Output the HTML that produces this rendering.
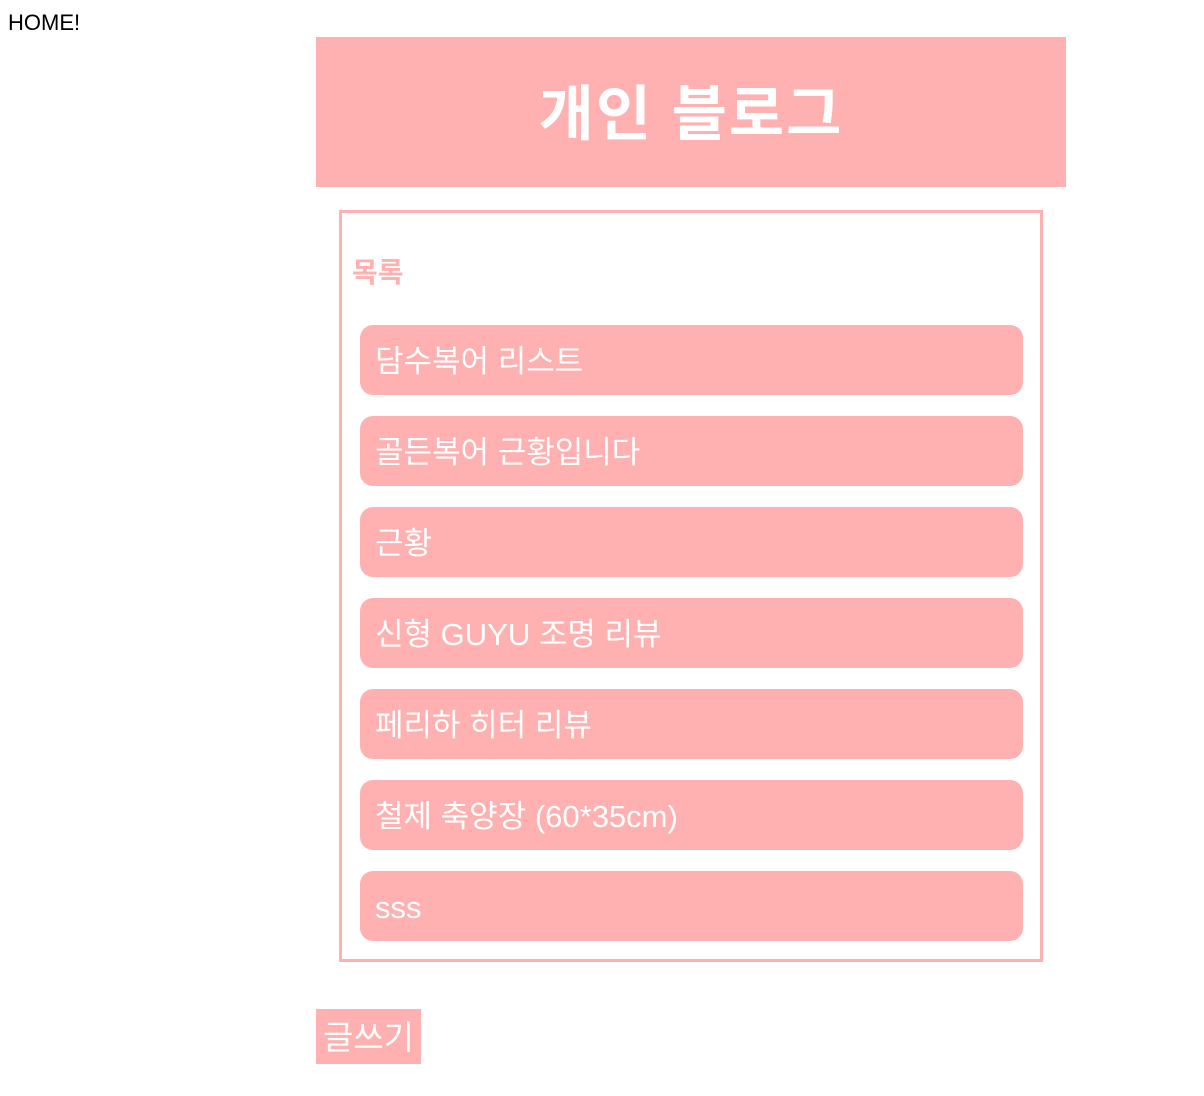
<!DOCTYPE html>
<html><head><meta charset="utf-8"><style>
body{margin:0;background:#fff;font-family:"Liberation Sans","Noto Sans CJK KR",sans-serif;}
.home{position:absolute;left:8px;top:9px;font-size:22px;color:#000;line-height:28px;}
.hdr{position:absolute;left:316px;top:37px;width:750px;height:150px;background:#ffb0b0;color:#fff;font-size:60px;font-weight:bold;text-align:center;line-height:156px;letter-spacing:2px;}
.box{position:absolute;left:339px;top:210px;width:698px;height:746px;border:3px solid #ffb0b0;}
.ttl{position:absolute;left:10px;top:38px;font-size:28px;font-weight:bold;color:#ffb0b0;}
.item{position:absolute;left:18px;width:663px;height:70px;background:#ffb0b0;border-radius:13px;color:#fff;font-size:31px;line-height:74px;padding-left:15px;box-sizing:border-box;}
.btn{position:absolute;left:316px;top:1009px;width:105px;height:55px;background:#ffb0b0;color:#fff;font-size:33px;line-height:58px;text-align:center;}
</style></head><body>
<div class="home">HOME!</div>
<div class="hdr">개인 블로그</div>
<div class="box">
<div class="ttl">목록</div>
<div class="item" style="top:112px">담수복어 리스트</div>
<div class="item" style="top:203px">골든복어 근황입니다</div>
<div class="item" style="top:294px">근황</div>
<div class="item" style="top:385px">신형 GUYU 조명 리뷰</div>
<div class="item" style="top:476px">페리하 히터 리뷰</div>
<div class="item" style="top:567px">철제 축양장 (60*35cm)</div>
<div class="item" style="top:658px">sss</div>
</div>
<div class="btn">글쓰기</div>
</body></html>
